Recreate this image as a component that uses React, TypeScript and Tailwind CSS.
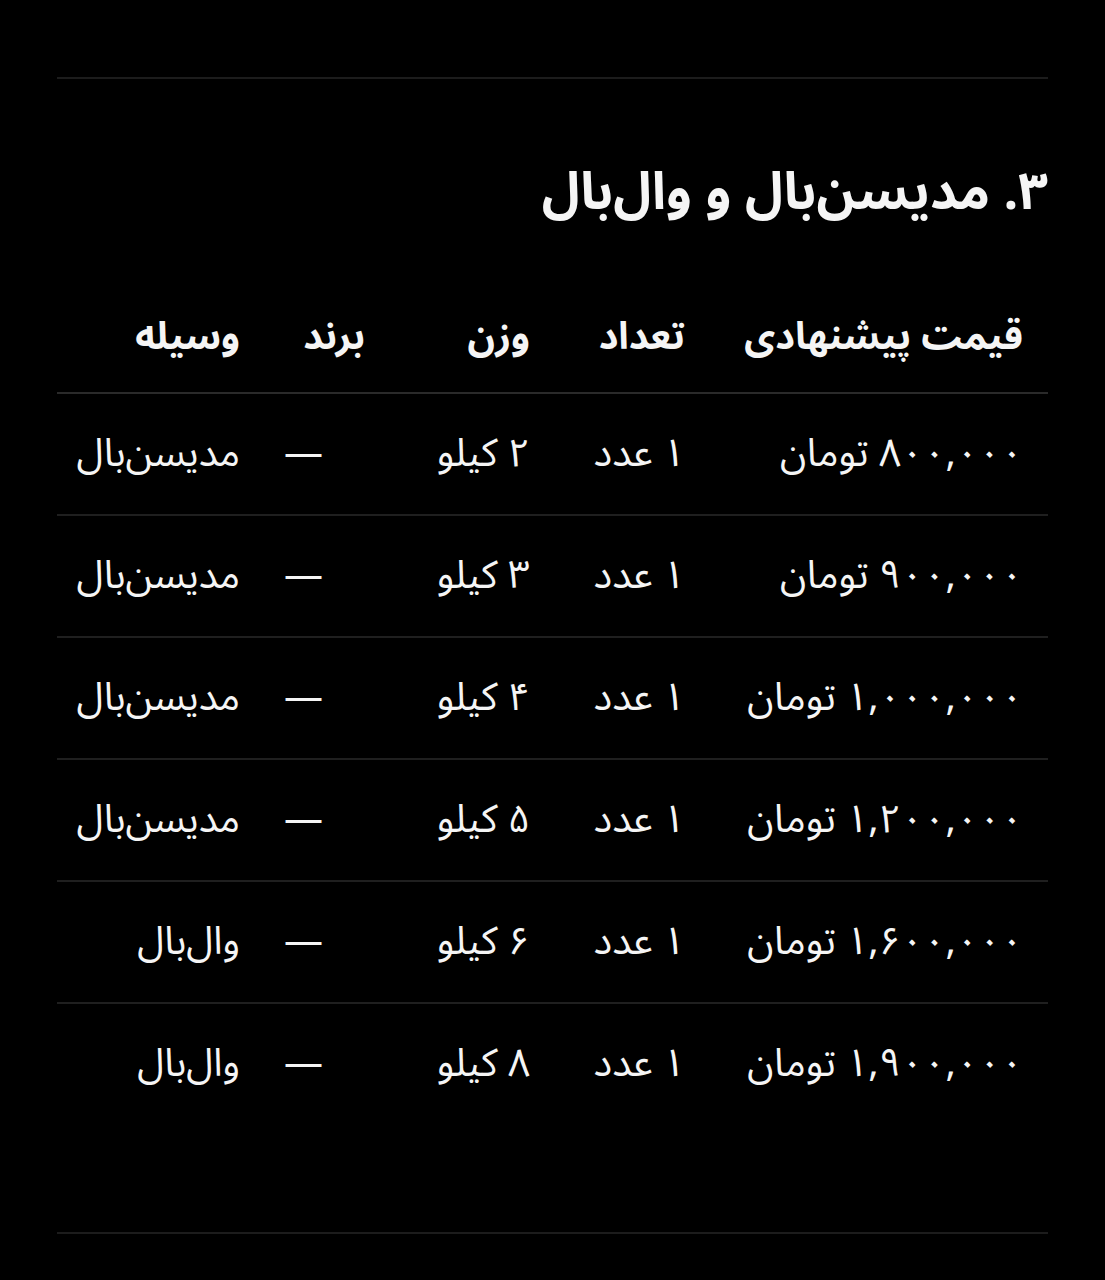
import React from "react";

const rows = [
  { price: "۸۰۰,۰۰۰ تومان", count: "۱ عدد", weight: "۲ کیلو", item: "مدیسن‌بال" },
  { price: "۹۰۰,۰۰۰ تومان", count: "۱ عدد", weight: "۳ کیلو", item: "مدیسن‌بال" },
  { price: "۱,۰۰۰,۰۰۰ تومان", count: "۱ عدد", weight: "۴ کیلو", item: "مدیسن‌بال" },
  { price: "۱,۲۰۰,۰۰۰ تومان", count: "۱ عدد", weight: "۵ کیلو", item: "مدیسن‌بال" },
  { price: "۱,۶۰۰,۰۰۰ تومان", count: "۱ عدد", weight: "۶ کیلو", item: "وال‌بال" },
  { price: "۱,۹۰۰,۰۰۰ تومان", count: "۱ عدد", weight: "۸ کیلو", item: "وال‌بال" },
];

const font = { fontFamily: '"Noto Sans Arabic", "DejaVu Sans", sans-serif' };

export default function App() {
  return (
    <div className="min-h-[1280px] bg-black text-[#f5f5f5] px-[57px] pt-[77px]" dir="rtl" style={font}>
      <div className="border-t-2 border-[#1c1c1c]" />
      <h2 className="mt-[76px] text-[52px] font-bold leading-[76px]">۳. مدیسن‌بال و وال‌بال</h2>
      <table className="w-full mt-[38px] border-collapse text-[39px]">
        <thead>
          <tr className="border-b-2 border-[#2a2a2a] h-[124px] text-[38px]">
            <th className="w-[338px] text-right font-bold pr-[25px] pt-[14px]">قیمت پیشنهادی</th>
            <th className="w-[155px] text-right font-bold pr-[25px] pt-[14px]">تعداد</th>
            <th className="w-[165px] text-right font-bold pr-[25px] pt-[14px]">وزن</th>
            <th className="w-[125px] text-right font-bold pr-[25px] pt-[14px]">برند</th>
            <th className="text-right font-bold pr-[25px] pt-[14px]">وسیله</th>
          </tr>
        </thead>
        <tbody>
          {rows.map((r, i) => (
            <tr key={i} className={"h-[122px] " + (i < rows.length - 1 ? "border-b-2 border-[#1f1f1f]" : "")}>
              <td className="pr-[25px] tracking-[-1px]">{r.price}</td>
              <td className="pr-[25px]">{r.count}</td>
              <td className="pr-[25px]">{r.weight}</td>
              <td className="pr-[67px]">—</td>
              <td className="pr-[25px]">{r.item}</td>
            </tr>
          ))}
        </tbody>
      </table>
      <div className="mt-[107px] border-t-2 border-[#1c1c1c]" />
    </div>
  );
}
